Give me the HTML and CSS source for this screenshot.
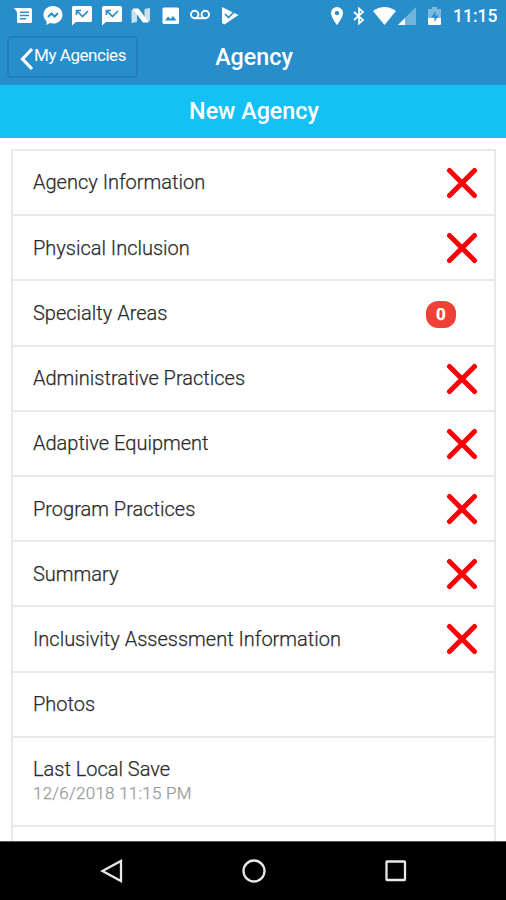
FILE: index.html
```html
<!DOCTYPE html>
<html lang="en">
<head>
  <meta charset="UTF-8">
  <meta name="viewport" content="width=device-width, initial-scale=1.0">
  <title>Agency</title>
  <link rel="stylesheet" href="styles.css">
</head>
<body>

<div class="status-bar">
  <div class="notifications">
    <svg viewBox="0 0 20 20"><path fill="#fff" fill-rule="evenodd" d="M1 2h16.500q1.500 0 1.500 1.500v12q0 1.500-1.500 1.500H5.500q-1.500 0-1.500-1.500V6zM7 5.500v1.600h9V5.500zM7 8.700v1.600h9V8.700zM7 11.900v1.600h6v-1.600z"/></svg>
    <svg viewBox="0 0 20 20"><path fill="#fff" d="M10 0C4.600 0 .5 3.800.5 8.700c0 2.600 1.100 4.800 3 6.400V19l3.400-1.900c1 .3 2 .4 3.100.4 5.400 0 9.500-3.800 9.500-8.800S15.400 0 10 0z"/><path fill="none" stroke="#288dcb" stroke-width="2" d="M5 11l3.500-3.500 3 3L15 7.300"/></svg>
    <svg viewBox="0 0 20 20"><path fill="#fff" d="M1.500 0h17Q20 0 20 1.500v13q0 1.500-1.500 1.500H4l-4 3.500v-18Q0 0 1.500 0z"/><path fill="none" stroke="#288dcb" stroke-width="1.700" d="M4.500 9V4.500H9M4.500 4.500L10.500 10.500 16 5"/></svg>
    <svg viewBox="0 0 20 20"><path fill="#fff" d="M1.500 0h17Q20 0 20 1.500v13q0 1.500-1.500 1.500H4l-4 3.500v-18Q0 0 1.500 0z"/><path fill="none" stroke="#288dcb" stroke-width="1.700" d="M4.500 9V4.500H9M4.500 4.500L10.500 10.500 16 5"/></svg>
    <svg viewBox="0 0 20 20"><path fill="#fff" opacity=".75" d="M.5 4l5.500-1v13l-5.500 1zM13.500 3l5.500-1v13l-5.500 1z"/><path fill="#fff" d="M1.500 2.500h6L18 16.500h-6z"/></svg>
    <svg viewBox="0 0 20 20"><rect x="1.500" y="1.500" width="16.500" height="16.500" rx="1.500" fill="#fff"/><path fill="#288dcb" d="M4 14.500l3-4 2.500 2.500 2.500-3 3.500 4.500z"/></svg>
    <svg viewBox="0 0 20 20"><g fill="none" stroke="#fff" stroke-width="2"><circle cx="4.700" cy="8.500" r="3.700"/><circle cx="15.300" cy="8.500" r="3.700"/><path d="M4.700 12.200h10.600"/></g></svg>
    <svg viewBox="0 0 20 20"><path fill="#fff" d="M2 1l4.500 2.300 4 2L18.500 9 4.500 18.500 2 17z"/><path fill="none" stroke="#288dcb" stroke-width="1.700" d="M5 8l3.500 3.500L16 4"/></svg>
  </div>
  <div class="system">
    <svg class="pin" viewBox="0 0 12 18"><path fill="#fff" fill-rule="evenodd" d="M6 0a6 6 0 0 0-6 6c0 4.500 6 12 6 12s6-7.500 6-12a6 6 0 0 0-6-6zm0 3.900a2.200 2.200 0 1 1 0 4.400 2.200 2.200 0 0 1 0-4.400z"/></svg>
    <svg class="bluetooth" viewBox="0 0 12 18"><path fill="none" stroke="#fff" stroke-width="1.800" d="M1 5l9 8-4 3.500V1.500L10 5l-9 8"/></svg>
    <svg class="wifi" viewBox="0 0 23 18"><path fill="#fff" d="M0 4Q11.500-4 23 4L11.500 18z"/></svg>
    <svg class="signal" viewBox="0 0 18 18"><path fill="#fff" opacity=".35" d="M18 0v18H0z"/><path fill="#fff" d="M7 11v7H0z"/></svg>
    <svg class="battery" viewBox="0 0 13 18"><path fill="#fff" opacity=".4" d="M4 0h5v2h4v9H0V2h4z"/><path fill="#fff" d="M0 11h13v6q0 1-1 1H1q-1 0-1-1z"/><path fill="#288dcb" d="M7.500 4L3 10.500h3.500V15l4-6.500h-3z"/></svg>
    <span class="clock">11:15</span>
  </div>
</div>

<div class="header">
  <button type="button" class="back">
    <svg viewBox="0 0 13 24"><path fill="none" stroke="#fff" stroke-width="3.200" d="M12 2L2.500 12l9.500 10"/></svg>
    <span>My Agencies</span>
  </button>
  <h1 class="title">Agency</h1>
</div>

<h2 class="agency-name">New Agency</h2>

<div class="content">
  <ul class="list">
    <li class="item">Agency Information <svg class="cross" viewBox="0 0 32 32"><path d="M3.500 3.500l25 25M28.500 3.500l-25 25"/></svg></li>
    <li class="item">Physical Inclusion <svg class="cross" viewBox="0 0 32 32"><path d="M3.500 3.500l25 25M28.500 3.500l-25 25"/></svg></li>
    <li class="item">Specialty Areas <span class="badge">0</span></li>
    <li class="item">Administrative Practices <svg class="cross" viewBox="0 0 32 32"><path d="M3.500 3.500l25 25M28.500 3.500l-25 25"/></svg></li>
    <li class="item">Adaptive Equipment <svg class="cross" viewBox="0 0 32 32"><path d="M3.500 3.500l25 25M28.500 3.500l-25 25"/></svg></li>
    <li class="item">Program Practices <svg class="cross" viewBox="0 0 32 32"><path d="M3.500 3.500l25 25M28.500 3.500l-25 25"/></svg></li>
    <li class="item">Summary <svg class="cross" viewBox="0 0 32 32"><path d="M3.500 3.500l25 25M28.500 3.500l-25 25"/></svg></li>
    <li class="item">Inclusivity Assessment Information <svg class="cross" viewBox="0 0 32 32"><path d="M3.500 3.500l25 25M28.500 3.500l-25 25"/></svg></li>
    <li class="item">Photos</li>
    <li class="item save">
      <span>Last Local Save</span>
      <span class="date">12/6/2018 11:15 PM</span>
    </li>
    <li class="item"></li>
  </ul>
</div>

<div class="nav-bar">
  <svg viewBox="0 0 24 24"><path d="M21 2v20L2.500 12z"/></svg>
  <svg viewBox="0 0 24 24"><circle cx="12" cy="12" r="10.500"/></svg>
  <svg viewBox="0 0 24 24"><rect x="2.500" y="2.500" width="18.500" height="18.500" rx=".5"/></svg>
</div>

</body>
</html>
```

FILE: styles.css
```css
* {
  box-sizing: border-box;
}

body {
  display: flex;
  flex-direction: column;
  height: 900px;
  margin: 0;
  overflow: hidden;
  background-color: #fff;
  font-family: Roboto, sans-serif;
  color: #2b2b2b;
}

.status-bar {
  display: flex;
  justify-content: space-between;
  flex: none;
  height: 31px;
  padding: 6px 9px 0 13px;
  background-color: #288dcb;
}

.notifications {
  display: flex;
  gap: 9.5px;
}

.notifications svg {
  width: 20px;
  height: 20px;
}

.system {
  display: flex;
  align-items: flex-start;
  padding-top: 1px;
}

.system svg {
  height: 18px;
}

.pin {
  width: 12px;
  margin-right: 10px;
}

.bluetooth {
  width: 12px;
  margin-right: 8px;
}

.wifi {
  width: 23px;
  margin-right: 2px;
}

.signal {
  width: 18px;
  margin-right: 12px;
}

.battery {
  width: 13px;
  margin-right: 12px;
}

.clock {
  width: 44px;
  font-size: 17.5px;
  font-weight: 500;
  line-height: 18px;
  white-space: nowrap;
  color: #fff;
}

.header {
  display: grid;
  grid-template-columns: 130px 1fr 130px;
  align-items: center;
  flex: none;
  height: 54px;
  padding: 0 5px 2px 7px;
  background-color: #288dcb;
}

.back {
  display: flex;
  align-items: center;
  width: 131px;
  height: 42px;
  padding: 0 0 0 11px;
  border: 2px solid #2580ba;
  border-radius: 4px;
  background: none;
  font-family: inherit;
  font-size: 17px;
  letter-spacing: -0.45px;
  color: #fff;
}

.back svg {
  flex: none;
  width: 13px;
  height: 24px;
  margin: 4px 1px 0 0;
}

.back span {
  margin-top: -4px;
  white-space: nowrap;
}

.title {
  margin: 0;
  font-size: 23.3px;
  font-weight: 500;
  text-align: center;
  color: #fff;
}

.agency-name {
  flex: none;
  height: 53px;
  margin: 0;
  padding-left: 2px;
  background-color: #13c1f5;
  font-size: 23.3px;
  font-weight: 500;
  line-height: 52px;
  text-align: center;
  color: #fff;
}

.content {
  flex: 1;
  min-height: 0;
  padding: 11px 10px 0 11px;
  overflow: hidden;
}

.list {
  margin: 0;
  padding: 0;
  border: 2px solid #e9e9e9;
  list-style: none;
}

.item {
  display: flex;
  align-items: center;
  justify-content: space-between;
  height: 65.2px;
  padding: 0 16px 0 20px;
  border-bottom: 2px solid #e9e9e9;
  font-size: 20px;
  font-weight: 300;
  -webkit-text-stroke: 0.25px;
}

.item:first-child {
  padding-bottom: 1px;
}

.cross {
  width: 32px;
  height: 32px;
  margin-top: 1px;
  fill: none;
  stroke: #fb0007;
  stroke-width: 5;
  stroke-linecap: round;
}

.badge {
  width: 30px;
  height: 27px;
  margin: 3px 22px 0 0;
  border-radius: 12px;
  background-color: #ef4136;
  font-size: 17px;
  font-weight: bold;
  line-height: 27px;
  text-align: center;
  color: #fff;
}

.save {
  flex-direction: column;
  align-items: flex-start;
  justify-content: flex-start;
  height: 89.500px;
  padding-top: 19.500px;
}

.date {
  margin-top: 2px;
  font-size: 17px;
  line-height: 20px;
  letter-spacing: 0.25px;
  color: #999;
}

.nav-bar {
  display: flex;
  align-items: center;
  justify-content: center;
  gap: 118px;
  flex: none;
  height: 59px;
  padding-left: 2px;
  border-top: 1px solid #555;
  background-color: #000;
}

.nav-bar svg {
  width: 24px;
  height: 24px;
  fill: none;
  stroke: #e8e8e8;
  stroke-width: 2.3;
}
```
